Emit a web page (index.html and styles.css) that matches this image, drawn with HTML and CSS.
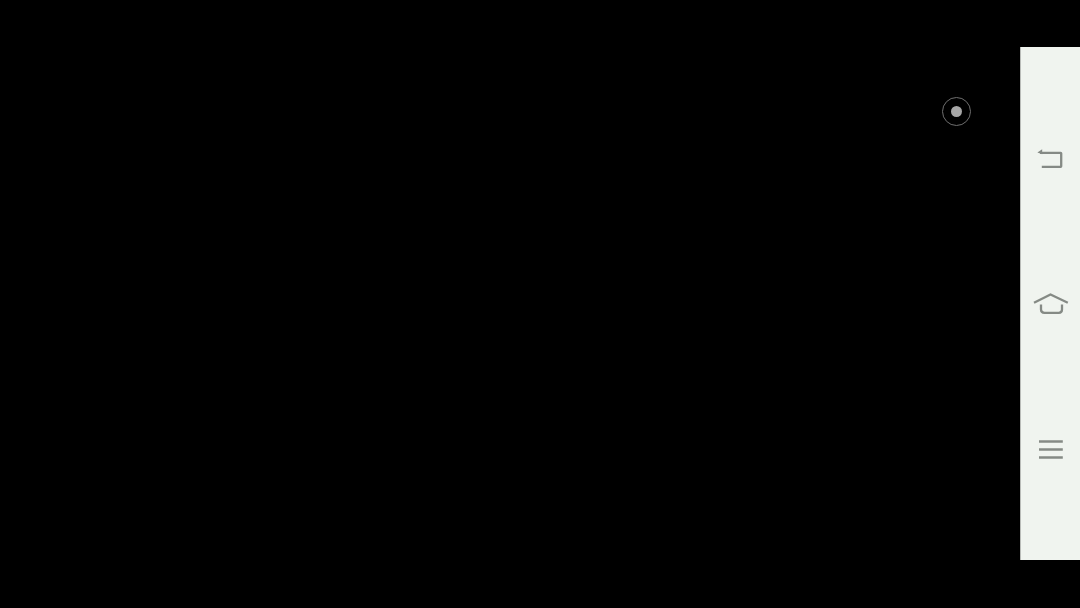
FILE: index.html
```html
<!DOCTYPE html>
<html lang="en">
<head>
  <meta charset="UTF-8" />
  <title>Navigation bar</title>
  <link rel="stylesheet" href="styles.css">
</head>
<body>
  <div class="screen">
    <!-- Viewfinder -->
    <div class="stage">
      <div class="shutter-dot"><span class="shutter-core"></span></div>
    </div>

    <!-- Soft keys -->
    <nav class="softkeys">
      <div class="softkey">
        <svg class="softkey-icon" viewBox="0 0 40 30" width="40" height="30">
          <path class="stroke" d="M9 8.8H29.7C30 8.8 30.2 9 30.2 9.3V22.3C30.2 22.6 30 22.8 29.7 22.8H10.8"/>
          <path class="fill" d="M6.4 8.6L11.2 5.2V10.2Z"/>
        </svg>
      </div>
      <div class="softkey">
        <svg class="softkey-icon" viewBox="0 0 40 30" width="40" height="30">
          <path class="stroke" d="M3 13.8L19.5 5.5L36.8 13.8"/>
          <path class="stroke" d="M10 15.5V20.5C10 23 11 23.8 13.5 23.8H27.8C30 23.8 31 23 31 20.5V15.5"/>
        </svg>
      </div>
      <div class="softkey">
        <svg class="softkey-icon" viewBox="0 0 40 30" width="40" height="30">
          <path class="stroke" d="M8 7.5H31.8M8 15.5H31.8M8 23.5H31.8"/>
        </svg>
      </div>
    </nav>
  </div>
</body>
</html>
```

FILE: styles.css
```css
* { box-sizing: border-box; }
body {
  margin: 0;
  background: #000;
  font-family: "Liberation Sans", Arial, sans-serif;
}

/* ===== Layout ===== */
.screen { display: flex; width: 1080px; height: 608px; overflow: hidden; }
.stage { flex: 1 1 auto; position: relative; }

/* ===== Record dot ===== */
.shutter-dot {
  position: absolute;
  left: 942px;
  top: 97px;
  width: 29px;
  height: 29px;
  display: flex;
  align-items: center;
  justify-content: center;
  border: 1px solid #6f6f6f;
  border-radius: 50%;
}
.shutter-core { width: 11px; height: 11px; border-radius: 50%; background: #a6a6a6; }

/* ===== Soft keys ===== */
.softkeys {
  flex: 0 0 60px;
  height: 513px;
  margin-top: 47px;
  padding: 39px 0;
  display: grid;
  grid-template-rows: repeat(3, 1fr);
  background: #f0f4ef;
  border-left: 1px solid #b9bcb8;
}
.softkey { display: flex; align-items: center; justify-content: center; }
.softkey-icon { display: block; }
.softkey-icon .stroke { fill: none; stroke: #858a85; stroke-width: 2.3; }
.softkey-icon .fill { fill: #858a85; }
```
